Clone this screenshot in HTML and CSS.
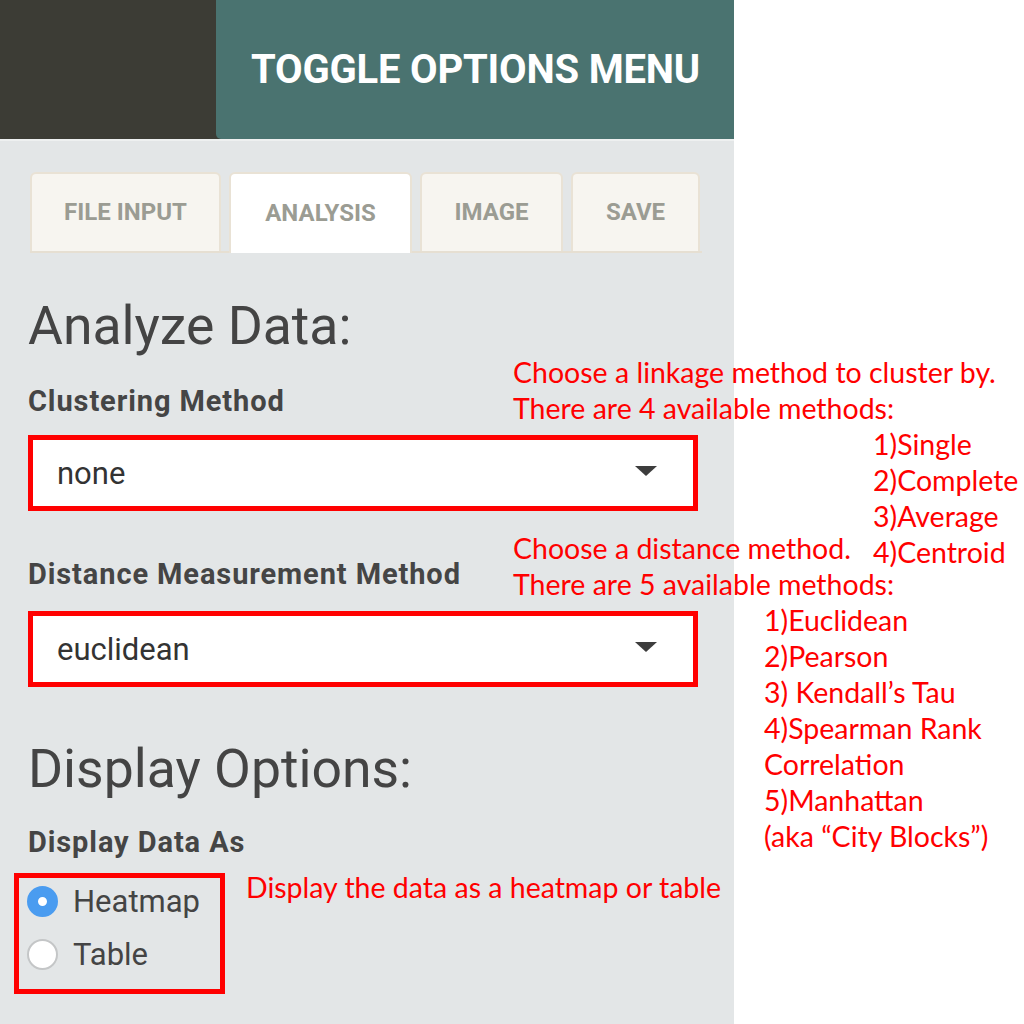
FILE: index.html
```html
<!DOCTYPE html>
<html lang="en">
<head>
<meta charset="utf-8">
<title>Analysis options</title>
<link rel="stylesheet" href="styles.css">
</head>
<body>
<div class="page">
  <aside class="panel">
    <header class="topbar">
      <div class="topbar-left"></div>
      <div class="toggle">TOGGLE OPTIONS MENU</div>
    </header>
    <div class="content">
      <nav class="tabs">
        <div class="tab tab-file">FILE INPUT</div>
        <div class="tab tab-analysis active">ANALYSIS</div>
        <div class="tab tab-image">IMAGE</div>
        <div class="tab tab-save">SAVE</div>
      </nav>
      <h2 class="heading h-analyze">Analyze Data:</h2>
      <div class="label l-cluster">Clustering Method</div>
      <div class="select s-cluster"><span>none</span><span class="caret"></span></div>
      <div class="label l-distance">Distance Measurement Method</div>
      <div class="select s-distance"><span>euclidean</span><span class="caret"></span></div>
      <h2 class="heading h-display">Display Options:</h2>
      <div class="label l-display">Display Data As</div>
      <div class="radios">
        <div class="radio-row"><span class="radio checked"></span><span>Heatmap</span></div>
        <div class="radio-row"><span class="radio"></span><span>Table</span></div>
      </div>
    </div>
  </aside>

  <div class="note note-cluster">
    <div>Choose a linkage method to cluster by.</div>
    <div>There are 4 available methods:</div>
    <div class="list list-cluster">
      <div>1)Single</div>
      <div>2)Complete</div>
      <div>3)Average</div>
      <div>4)Centroid</div>
    </div>
  </div>
  <div class="note note-distance">
    <div>Choose a distance method.</div>
    <div>There are 5 available methods:</div>
    <div class="list list-distance">
      <div>1)Euclidean</div>
      <div>2)Pearson</div>
      <div>3) Kendall’s Tau</div>
      <div>4)Spearman Rank</div>
      <div>Correlation</div>
      <div>5)Manhattan</div>
      <div>(aka “City Blocks”)</div>
    </div>
  </div>
  <div class="note note-display">Display the data as a heatmap or table</div>
</div>
</body>
</html>
```

FILE: styles.css
```css
html, body {
  margin: 0;
  padding: 0;
  background: #ffffff;
}

.page {
  position: relative;
  width: 1024px;
  height: 1024px;
  overflow: hidden;
}

.panel {
  width: 734px;
  height: 1024px;
  background: #e3e6e7;
  font-family: Roboto, "Liberation Sans", sans-serif;
  color: #434343;
}

.topbar {
  display: flex;
  height: 139px;
  background: #3c3c35;
  border-bottom: 2px solid #eef0f0;
}

.topbar-left {
  width: 216px;
}

.toggle {
  flex: 1;
  display: flex;
  align-items: center;
  padding-left: 35px;
  background: #4a7370;
  border-bottom-left-radius: 5px;
  color: #ffffff;
  font-weight: 700;
  font-size: 40px;
  letter-spacing: -0.2px;
}

.content {
  padding: 31px 34px 0 28px;
}

.tabs {
  display: flex;
  gap: 8px;
  margin-left: 2px;
  width: 672px;
  height: 81px;
  border-bottom: 2px solid #e6dfd2;
  box-sizing: border-box;
}

.tab {
  flex: none;
  display: flex;
  align-items: center;
  justify-content: center;
  box-sizing: border-box;
  padding-bottom: 2px;
  background: #f7f5f0;
  border: 2px solid #e9e2d5;
  border-bottom: none;
  border-radius: 6px 6px 0 0;
  color: #9b9c93;
  font-weight: 700;
  font-size: 24px;
  white-space: nowrap;
}

.tab-file { width: 191px; }
.tab-analysis { width: 183px; }
.tab-image { width: 143px; }
.tab-save { width: 129px; }

.tab.active {
  background: #ffffff;
  margin-bottom: -2px;
}

.heading {
  margin: 0;
  font-weight: 400;
  font-size: 53.5px;
  line-height: 60px;
  color: #444444;
}

.h-analyze { margin-top: 43px; }
.h-display { margin-top: 52px; }

.label {
  font-weight: 700;
  font-size: 29px;
  line-height: 34px;
  letter-spacing: 0.9px;
  color: #454545;
}

.l-cluster { margin-top: 28px; }
.l-distance { margin-top: 46px; }
.l-display { margin-top: 26px; }

.select {
  display: flex;
  align-items: center;
  justify-content: space-between;
  width: 670px;
  height: 76px;
  box-sizing: border-box;
  padding: 0 36px 0 24px;
  background: #ffffff;
  border: 5px solid #ff0000;
  font-size: 31px;
  color: #333333;
}

.s-cluster { margin-top: 17px; }
.s-distance { margin-top: 20px; }

.caret {
  width: 0;
  height: 0;
  border-left: 11px solid transparent;
  border-right: 11px solid transparent;
  border-top: 10px solid #3d3d3d;
  margin-top: -4px;
}

.radios {
  margin: 14px 0 0 -14px;
  width: 211px;
  height: 121px;
  box-sizing: border-box;
  border: 5px solid #ff0000;
  padding: 0 0 0 8px;
  display: flex;
  flex-direction: column;
  gap: 7px;
}

.radio-row {
  display: flex;
  align-items: center;
  gap: 15px;
  height: 46px;
  font-size: 31px;
  color: #444444;
}

.radio {
  width: 31px;
  height: 31px;
  box-sizing: border-box;
  border-radius: 50%;
  background: #ffffff;
  border: 2px solid #c4c6c7;
}

.radio.checked {
  background: #ffffff;
  border: 11.5px solid #4a9cf0;
}

.note {
  position: absolute;
  font-family: Lato, "Open Sans", sans-serif;
  font-size: 28.5px;
  line-height: 36px;
  color: #ff0000;
  white-space: nowrap;
}

.note-cluster { left: 513px; top: 354px; }
.list-cluster { padding-left: 360px; }
.note-distance { left: 513px; top: 530px; }
.list-distance { padding-left: 251px; }
.note-display { left: 246px; top: 869px; }
```
